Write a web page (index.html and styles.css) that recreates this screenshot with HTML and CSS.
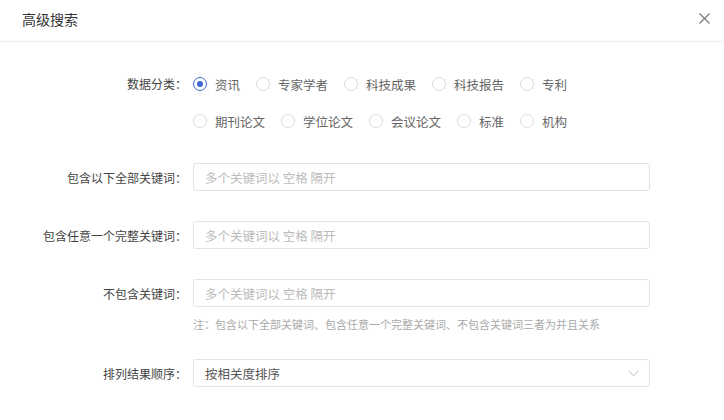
FILE: index.html
```html
<!DOCTYPE html>
<html lang="zh-CN">
<head>
    <meta charset="UTF-8">
    <meta name="viewport" content="width=device-width, initial-scale=1.0">
    <title>高级搜索</title>
    <link rel="stylesheet" href="styles.css">
</head>
<body>
    <div class="dialog">
        <div class="dialog-header">
            <span class="dialog-title">高级搜索</span>
            <span class="dialog-close">
                <svg width="11" height="11" viewBox="0 0 11 11"><path d="M0.5 0.5 L10.5 10.5 M10.5 0.5 L0.5 10.5" stroke="#777" stroke-width="1.2" fill="none"/></svg>
            </span>
        </div>

        <div class="dialog-body">
            <div class="form-row radio-row">
                <label class="form-label">数据分类：</label>
                <div class="radio-group">
                    <label class="radio checked"><span class="radio-dot"></span>资讯</label>
                    <label class="radio"><span class="radio-dot"></span>专家学者</label>
                    <label class="radio"><span class="radio-dot"></span>科技成果</label>
                    <label class="radio"><span class="radio-dot"></span>科技报告</label>
                    <label class="radio"><span class="radio-dot"></span>专利</label>
                    <label class="radio"><span class="radio-dot"></span>期刊论文</label>
                    <label class="radio"><span class="radio-dot"></span>学位论文</label>
                    <label class="radio"><span class="radio-dot"></span>会议论文</label>
                    <label class="radio"><span class="radio-dot"></span>标准</label>
                    <label class="radio"><span class="radio-dot"></span>机构</label>
                </div>
            </div>

            <div class="form-row">
                <label class="form-label" for="kwAll">包含以下全部关键词：</label>
                <input class="form-input" type="text" id="kwAll" placeholder="多个关键词以 空格 隔开">
            </div>
            <div class="form-row">
                <label class="form-label" for="kwAny">包含任意一个完整关键词：</label>
                <input class="form-input" type="text" id="kwAny" placeholder="多个关键词以 空格 隔开">
            </div>
            <div class="form-row">
                <label class="form-label" for="kwNot">不包含关键词：</label>
                <input class="form-input" type="text" id="kwNot" placeholder="多个关键词以 空格 隔开">
            </div>
            <p class="form-note">注：包含以下全部关键词、包含任意一个完整关键词、不包含关键词三者为并且关系</p>

            <div class="form-row">
                <label class="form-label">排列结果顺序：</label>
                <div class="form-select">
                    <span>按相关度排序</span>
                    <svg width="11" height="7" viewBox="0 0 11 7"><path d="M0.5 0.8 L5.5 5.8 L10.5 0.8" stroke="#bbb" stroke-width="1" fill="none"/></svg>
                </div>
            </div>
        </div>
    </div>
</body>
</html>
```

FILE: styles.css
```css
body {
    margin: 0;
    font-family: "Noto Sans CJK SC", "Noto Sans", sans-serif;
    background-color: #fff;
    color: #444;
}
.dialog {
    width: 724px;
    height: 420px;
    background-color: #fff;
}
.dialog-header {
    height: 42px;
    display: flex;
    align-items: center;
    justify-content: space-between;
    padding: 0 14px 0 22px;
    border-bottom: 1px solid #eee;
    box-sizing: border-box;
}
.dialog-title {
    font-size: 14px;
    color: #333;
    margin-top: -3px;
}
.dialog-close {
    display: flex;
    margin-top: -4px;
}
.dialog-body {
    padding-top: 31px;
}
.form-row {
    display: flex;
    align-items: center;
    margin-bottom: 30px;
}
.form-label {
    width: 187px;
    flex-shrink: 0;
    text-align: right;
    font-size: 12px;
    color: #444;
    margin-right: 6px;
}
.radio-row {
    align-items: flex-start;
    margin-bottom: 31px;
}
.radio-row .form-label {
    line-height: 22px;
}
.radio-group {
    width: 457px;
    display: flex;
    flex-wrap: wrap;
    column-gap: 16px;
    row-gap: 15px;
}
.radio {
    display: flex;
    align-items: center;
    height: 22px;
    font-size: 12.5px;
    color: #666;
}
.radio-dot {
    width: 14px;
    height: 14px;
    box-sizing: border-box;
    border: 1px solid #ddd;
    border-radius: 50%;
    margin-right: 8px;
    position: relative;
}
.radio.checked .radio-dot {
    border-color: #3b66d4;
}
.radio.checked .radio-dot::after {
    content: "";
    position: absolute;
    left: 3px;
    top: 3px;
    width: 6px;
    height: 6px;
    border-radius: 50%;
    background-color: #3b66d4;
}
.form-input, .form-select {
    width: 457px;
    height: 28px;
    box-sizing: border-box;
    border: 1px solid #e3e3e3;
    border-radius: 3px;
    padding: 0 11px;
    font-family: inherit;
    font-size: 12.5px;
    color: #555;
    outline: none;
}
.form-input::placeholder {
    color: #bbb;
}
.form-select {
    display: flex;
    align-items: center;
    justify-content: space-between;
    padding-right: 10px;
}
.form-note {
    margin: -21px 0 27px 193px;
    font-size: 11px;
    line-height: 16px;
    color: #aaa;
}
```
